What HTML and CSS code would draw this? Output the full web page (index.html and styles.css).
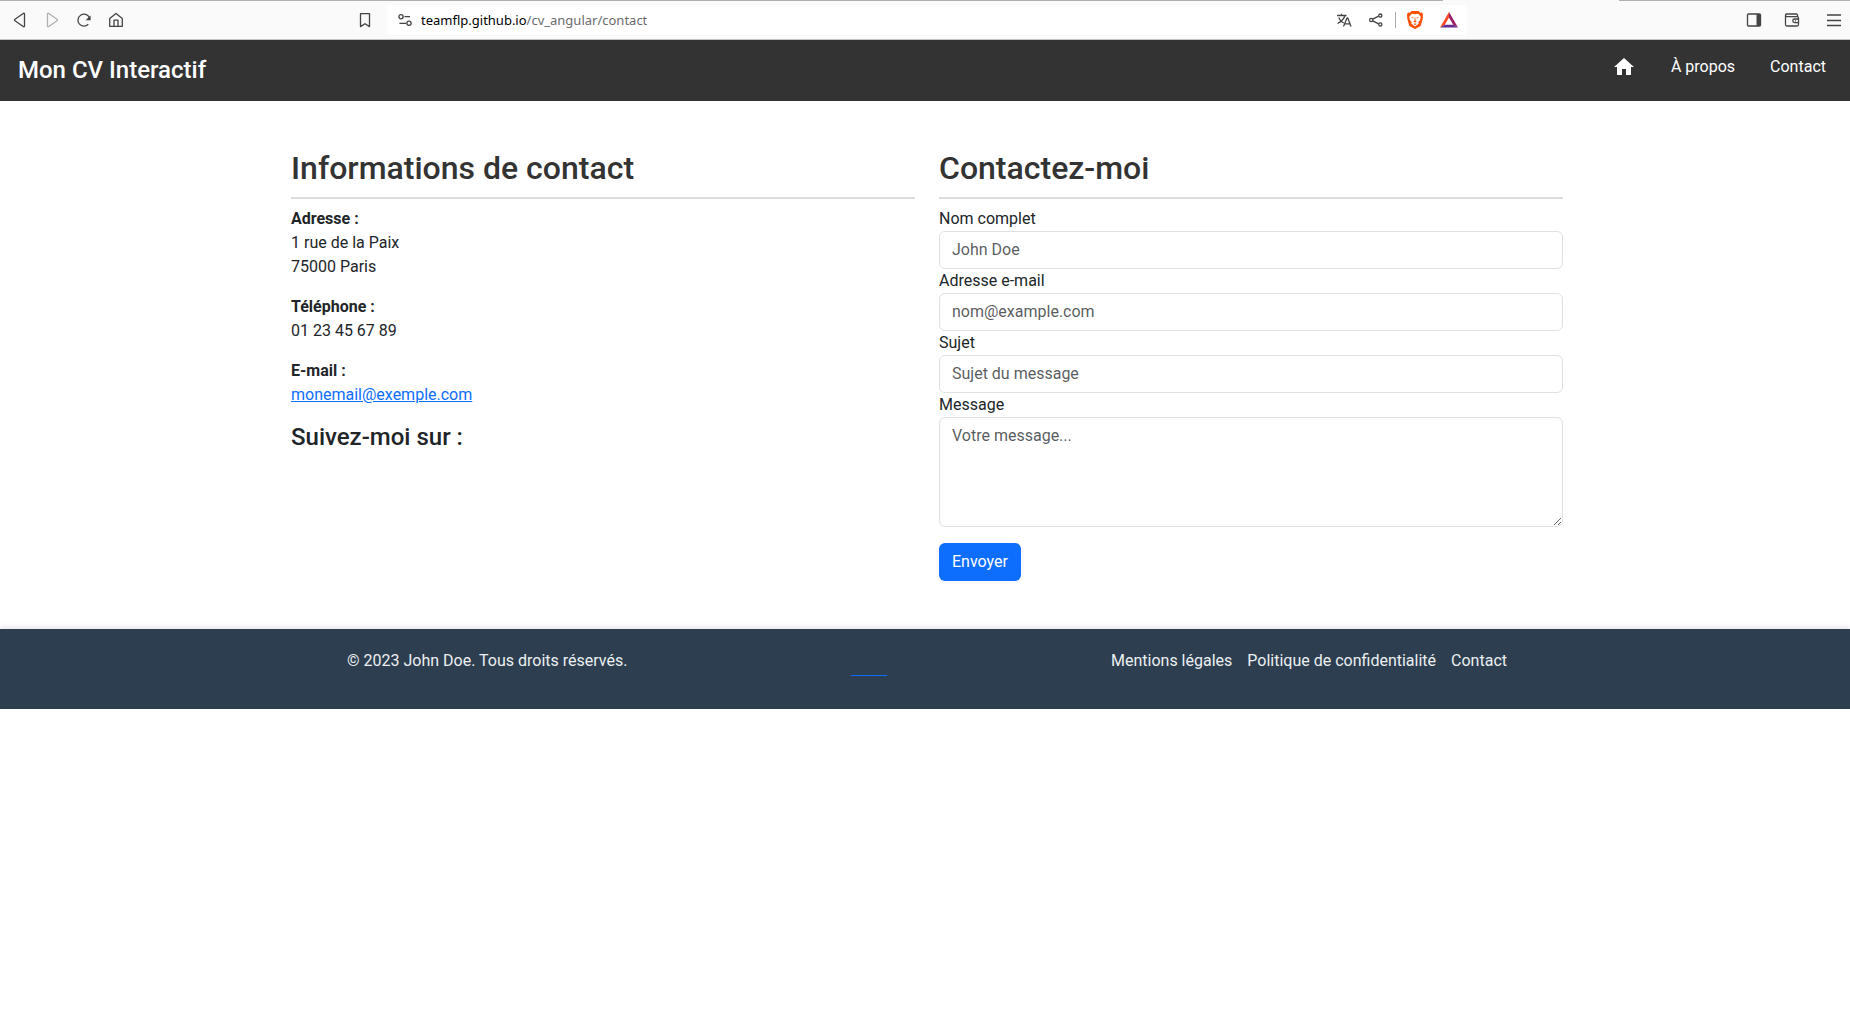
FILE: index.html
```html
<!DOCTYPE html>
<html lang="fr">
<head>
<meta charset="utf-8">
<meta name="viewport" content="width=device-width, initial-scale=1">
<title>Mon CV Interactif</title>
<link rel="stylesheet" href="styles.css">
</head>
<body>
<div class="toolbar">
  <div class="toolbar-left">
    <div class="tool-group">
      <button class="tool" type="button" aria-label="Précédent"><svg viewBox="0 0 18 18"><path d="M13.5 3.2v11.6q0 1.6-1.3.7L4 9.8q-1-.8 0-1.6l8.200-5.700q1.300-.9 1.300.7z"/></svg></button>
      <button class="tool tool-off" type="button" aria-label="Suivant"><svg viewBox="0 0 18 18"><path d="M4.500 3.200v11.600q0 1.600 1.300.7L14 9.800q1-.8 0-1.600L5.800 2.500q-1.300-.9-1.300.7z"/></svg></button>
      <button class="tool" type="button" aria-label="Actualiser"><svg viewBox="0 0 18 18"><path d="M13.300 13.300a6 6 0 1 1 1.200-6.500"/><path class="solid" d="M15.600 4.500v4.800h-5z"/></svg></button>
      <button class="tool" type="button" aria-label="Accueil"><svg viewBox="0 0 18 18"><path d="M2.700 7.500 9 2.500l6.300 5v7.800h-12.600zM7 15.300V9.200h4v6.100"/></svg></button>
    </div>
    <button class="tool" type="button" aria-label="Ajouter aux favoris"><svg viewBox="0 0 18 18"><path d="M4.500 2.600h9v13L9 12.700l-4.500 2.900z"/></svg></button>
  </div>
  <div class="address">
    <button class="site-info" type="button" aria-label="Informations du site"><svg viewBox="0 0 18 18"><circle cx="5" cy="5.700" r="2.100"/><path d="M8.500 5.700H14M3.500 12.300H10"/><circle cx="13" cy="12.300" r="2.100"/></svg></button>
    <span class="url">teamflp.github.io<span class="url-path">/cv_angular/contact</span></span>
    <button class="tool" type="button" aria-label="Traduire"><svg viewBox="0 0 18 18"><path d="M2 4.500h9.500M6.500 2.800v1.700M3.800 6.500q2 4.500 5 5.500M10 4.500q-1.500 5-7.500 8M8.500 15.500l3.500-8.500h.8l3.200 8.500M9.700 12.800h5.200"/></svg></button>
    <button class="tool" type="button" aria-label="Partager"><svg viewBox="0 0 18 18"><path d="m5.700 8.200 6-3M5.700 9.800l6 3"/><circle cx="4.200" cy="9" r="1.600"/><circle cx="13.300" cy="4.600" r="1.600"/><circle cx="13.300" cy="13.400" r="1.600"/></svg></button>
    <span class="divider"></span>
    <button class="tool" type="button" aria-label="Brave Shields"><svg class="color" viewBox="0 0 18 18"><path fill="#ff5000" d="M5.500 0h7l1.700 1.700 1.800-.2 1.200 2.300-.5 1.500.3 1.200-2 7.500q-.3 1-1.200 1.600L9 18l-4.800-2.400Q3.300 15 3 14L1 6.500l.3-1.200L.8 3.800 2 1.500l1.800.2z"/><path fill="#fff" d="m5.800 2.700 3.200.6 3.200-.6 2.600 3-.8 3.600-1.700 1.700.5 1.500L9 15.400l-3.800-2.900.5-1.500L4 9.300l-.8-3.600z"/><path fill="#ff5000" d="m5 6 2.600.5-.6 1.100zM13 6l-2.600.5.6 1.100zM8.700 6.500h.6l.2 3.200 1.200.7L9 11.500l-1.700-1.100 1.200-.7zM7.500 13 9 12.300l1.500.7L9 13.900z"/></svg></button>
    <button class="tool rewards" type="button" aria-label="Brave Rewards"><svg class="color" viewBox="0 0 18 18"><path fill="#ff4724" d="M9 1v5.500L4.800 13.700 0 16.500z"/><path fill="#9e1f63" d="m9 1 9 15.500-4.800-2.800L9 6.500z"/><path fill="#662d91" d="M0 16.500 4.800 13.700h8.400L18 16.500z"/></svg></button>
  </div>
  <div class="toolbar-right">
    <button class="tool" type="button" aria-label="Panneau latéral"><svg viewBox="0 0 18 18"><rect x="2.500" y="3" width="13" height="12" rx="1"/><path class="solid" d="M11.500 3h4v12h-4z"/></svg></button>
    <button class="tool" type="button" aria-label="Portefeuille"><svg viewBox="0 0 18 18"><path d="M14.500 5.700V4.200q0-1.200-1.200-1.200H3.700Q2.500 3 2.500 4.300v9.200q0 1.500 1.500 1.500h10q1.500 0 1.500-1.500V7q0-1.300-1.500-1.300H4q-1.500 0-1.500-1.400M15.500 8h-4q-1.700 0-1.700 1.800t1.700 1.800h4M12 9.800h1"/></svg></button>
    <button class="tool tool-menu" type="button" aria-label="Menu"><svg viewBox="0 0 18 18"><path d="M2 4h14M2 9.500h14M2 14.500h14"/></svg></button>
  </div>
</div>

<header class="navbar">
  <a class="brand" href="#">Mon CV Interactif</a>
  <nav class="nav-links">
    <a href="#" aria-label="Accueil"><svg class="home-icon" viewBox="0 0 24 24"><path d="M10 20v-6h4v6h5v-8h3L12 3 2 12h3v8z"/></svg></a>
    <a href="#">À propos</a>
    <a href="#">Contact</a>
  </nav>
</header>

<main class="container">
  <section>
    <h2>Informations de contact</h2>
    <p><strong>Adresse :</strong><br>1 rue de la Paix<br>75000 Paris</p>
    <p><strong>Téléphone :</strong><br>01 23 45 67 89</p>
    <p><strong>E-mail :</strong><br><a href="mailto:monemail@exemple.com">monemail@exemple.com</a></p>
    <h4>Suivez-moi sur :</h4>
  </section>
  <section>
    <h2>Contactez-moi</h2>
    <form>
      <label for="name">Nom complet</label>
      <input class="field" id="name" type="text" placeholder="John Doe">
      <label for="email">Adresse e-mail</label>
      <input class="field" id="email" type="email" placeholder="nom@example.com">
      <label for="subject">Sujet</label>
      <input class="field" id="subject" type="text" placeholder="Sujet du message">
      <label for="message">Message</label>
      <textarea class="field" id="message" rows="4" placeholder="Votre message..."></textarea>
      <button class="submit" type="submit">Envoyer</button>
    </form>
  </section>
</main>

<footer class="footer">
  <div class="footer-inner">
    <span>© 2023 John Doe. Tous droits réservés.</span>
    <a class="social" href="#" aria-label="Réseaux sociaux"></a>
    <nav class="footer-links">
      <a href="#">Mentions légales</a>
      <a href="#">Politique de confidentialité</a>
      <a href="#">Contact</a>
    </nav>
  </div>
</footer>
</body>
</html>
```
FILE: styles.css
```css
* { box-sizing: border-box; }

body {
  margin: 0;
  font: 400 16px/24px Roboto, "Liberation Sans", sans-serif;
  color: #212529;
  background: #fff;
}

button { font: inherit; border: 0; background: none; padding: 0; }

/* Browser toolbar */
.toolbar {
  display: grid;
  grid-template-columns: 1fr minmax(0, 1080px) 1fr;
  align-items: center;
  height: 40px;
  padding-left: 4px;
  border-bottom: 1px solid #c4c4c4;
  background: linear-gradient(90deg, #b0b0b0 78%, #fafafa 78%, #fafafa 87.5%, #b0b0b0 87.5%) top / 100% 1px no-repeat #fafafa;
}
.toolbar-left { display: flex; justify-content: space-between; padding-right: 6px; }
.tool-group { display: flex; }
.toolbar-right { display: flex; justify-content: flex-end; gap: 6px; }
.tool { display: grid; place-items: center; width: 32px; height: 30px; flex: none; }
.tool-off { opacity: .4; }
.tool-menu { margin-left: 4px; }
.toolbar svg { display: block; width: 18px; height: 18px; fill: none; stroke: #444; stroke-width: 1.3; stroke-linejoin: round; }
.toolbar svg .solid { fill: #444; stroke: none; }
.toolbar svg.color { stroke: none; }
.address {
  display: flex;
  align-items: center;
  height: 30px;
  padding: 0 2px 0 9px;
  border-radius: 4px;
  background: #fff;
}
.site-info { width: 18px; margin-right: 7px; }
.url { flex: 1; font: 13px/20px "Noto Sans", sans-serif; color: #000; white-space: nowrap; overflow: hidden; }
.url-path { color: #6b6b6b; }
.divider { width: 1px; height: 16px; margin: 0 3px; background: #aaa; }
.rewards { margin-left: 2px; }

/* Site header */
.navbar {
  display: flex;
  justify-content: space-between;
  align-items: flex-start;
  padding: 14px 24px 15px 18px;
  background: #333;
}
.navbar a { color: #fff; text-decoration: none; }
.brand { font-size: 24px; line-height: 32px; font-weight: 500; }
.nav-links { display: flex; gap: 35px; padding-top: 1px; }
.home-icon { display: block; width: 24px; height: 24px; fill: #fff; }

/* Contact page */
.container {
  display: grid;
  grid-template-columns: 1fr 1fr;
  gap: 24px;
  width: 100%;
  max-width: 1320px;
  margin: 0 auto;
  padding: 48px 22px 48px 26px;
}
h2 {
  margin: 0 0 8px;
  padding-bottom: 10px;
  border-bottom: 2px solid #ddd;
  font-size: 32px;
  line-height: 38px;
  font-weight: 500;
  color: #333;
}
h4 { margin: 0; font-size: 24px; line-height: 29px; font-weight: 500; }
p { margin: 0 0 16px; }
p a { color: #0d6efd; }
label { display: block; }
.field {
  display: block;
  width: 100%;
  padding: 6px 12px;
  border: 1px solid #dee2e6;
  border-radius: 6px;
  background: #fff;
  color: #212529;
  font: inherit;
  resize: vertical;
}
.field::placeholder { color: rgba(33, 37, 41, .75); }
.submit {
  margin-top: 16px;
  padding: 7px 13px;
  border-radius: 6px;
  background: #0d6efd;
  color: #fff;
}

/* Footer */
.footer { padding: 20px 0 36px; background: #2c3e50; color: #ecf0f1; box-shadow: 0 -2px 5px rgba(0, 0, 0, .1); }
.footer-inner {
  display: flex;
  justify-content: space-between;
  width: 100%;
  max-width: 1320px;
  margin: 0 auto;
  padding: 0 78px 0 82px;
}
.footer-links { display: flex; gap: 15px; }
.footer-links a { color: inherit; text-decoration: none; }
.social { width: 36px; height: 27px; margin-bottom: -3px; border-bottom: 1px solid #0d6efd; }
```
